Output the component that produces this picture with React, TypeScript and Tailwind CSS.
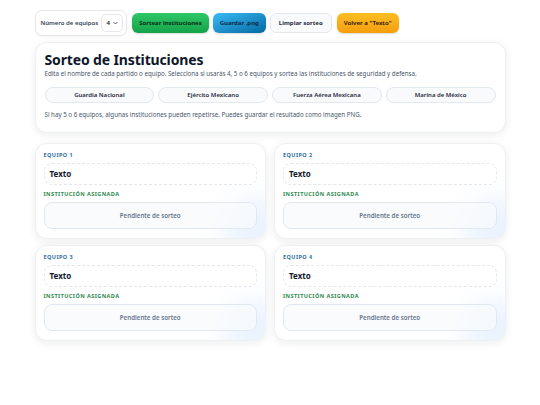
import React from "react";

const teams = [1, 2, 3, 4];
const insts = ["Guardia Nacional", "Ejército Mexicano", "Fuerza Aérea Mexicana", "Marina de México"];

export default function App() {
  return (
    <div className="min-h-[405px] bg-white text-[#0f172a]" style={{ fontFamily: '"Noto Sans", "DejaVu Sans", sans-serif' }}>
      <div className="mx-auto w-[471px] pt-[10px]">
        {/* toolbar */}
        <div className="flex items-center gap-[4px]">
          <div className="flex h-[26px] items-center gap-[3px] rounded-[7px] border border-[#e5e7eb] bg-white pl-[5px] pr-[3px] shadow-[0_1px_2px_rgba(0,0,0,0.04)]">
            <span className="text-[6px] font-semibold text-[#334155]">Número de equipos</span>
            <div className="flex h-[18px] w-[22px] items-center justify-center gap-[3px] rounded-[5px] border border-[#e5e7eb] bg-white">
              <span className="text-[6px] font-semibold">4</span>
              <svg width="5" height="4" viewBox="0 0 10 6"><path d="M1 1l4 4 4-4" stroke="#334155" strokeWidth="1.6" fill="none" /></svg>
            </div>
          </div>
          <button className="ml-[1px] h-[20px] rounded-[6px] bg-gradient-to-b from-[#2fc766] to-[#16a34a] px-[7px] text-[6px] font-bold text-[#052e16] shadow-[0_1px_2px_rgba(0,0,0,0.15)]">Sortear instituciones</button>
          <button className="h-[20px] rounded-[6px] bg-gradient-to-br from-[#38bdf8] to-[#0369a1] px-[7px] text-[6px] font-bold text-[#0c2a4a] shadow-[0_1px_2px_rgba(0,0,0,0.15)]">Guardar .png</button>
          <button className="h-[20px] rounded-[6px] border border-[#e5e7eb] bg-[#f8fafc] px-[8px] text-[6px] font-bold text-[#1e293b]">Limpiar sorteo</button>
          <button className="ml-[1px] h-[20px] rounded-[6px] bg-gradient-to-b from-[#fbbf24] to-[#f59e0b] px-[7px] text-[6px] font-bold text-[#3b1d04] shadow-[0_1px_2px_rgba(0,0,0,0.15)]">Volver a "Texto"</button>
        </div>

        {/* main card */}
        <div className="mt-[6px] rounded-[12px] border border-[#eef0f3] bg-white px-[9px] pb-[13px] pt-[8px] shadow-[0_2px_8px_rgba(15,23,42,0.08)]">
          <h1 className="text-[14px] font-bold leading-[18px] tracking-[-0.01em] text-[#0f172a]">Sorteo de Instituciones</h1>
          <p className="mt-[1px] text-[6.2px] leading-[8px] text-[#475569]">Edita el nombre de cada partido o equipo. Selecciona si usarás 4, 5 o 6 equipos y sortea las instituciones de seguridad y defensa.</p>
          <div className="mt-[9px] grid grid-cols-4 gap-[4px]">
            {insts.map((n) => (
              <div key={n} className="flex h-[16px] items-center justify-center rounded-full border border-[#e2e8f0] bg-[#f8fafc] text-[6px] font-semibold text-[#1e293b]">{n}</div>
            ))}
          </div>
          <p className="mt-[8px] text-[6.2px] leading-[8px] text-[#475569]">Si hay 5 o 6 equipos, algunas instituciones pueden repetirse. Puedes guardar el resultado como imagen PNG.</p>
        </div>

        {/* teams */}
        <div className="mt-[10px] grid grid-cols-2 gap-x-[8px] gap-y-[6px]">
          {teams.map((t) => (
            <div key={t} className="relative overflow-hidden rounded-[12px] border border-[#eef0f3] bg-white px-[8px] pb-[9px] pt-[8px] shadow-[0_2px_8px_rgba(15,23,42,0.08)]">
              <div className="pointer-events-none absolute -bottom-[30px] -right-[30px] h-[70px] w-[70px] rounded-full bg-[#dbeafe] opacity-60 blur-[14px]" />
              <div className="relative">
                <div className="text-[5.5px] font-bold leading-[7px] tracking-[0.08em] text-[#2f6f9f]">EQUIPO {t}</div>
                <div className="mt-[4px] flex h-[22px] items-center rounded-[8px] border border-dashed border-[#e5e7eb] bg-white px-[5px] text-[8px] font-bold text-[#0f172a]">Texto</div>
                <div className="mt-[6px] text-[5.5px] font-bold leading-[7px] tracking-[0.08em] text-[#2e8a4f]">INSTITUCIÓN ASIGNADA</div>
                <div className="mt-[4px] flex h-[27px] items-center justify-center rounded-[8px] border border-[#e2e8f0] bg-[#f8fafc]/80 text-[6.2px] font-semibold text-[#64748b]">Pendiente de sorteo</div>
              </div>
            </div>
          ))}
        </div>
      </div>
    </div>
  );
}
